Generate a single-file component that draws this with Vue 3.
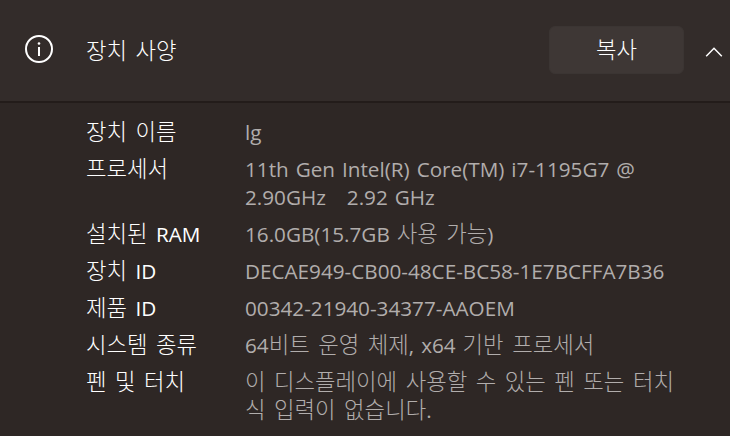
<template>
  <div class="panel">
    <div class="header">
      <svg class="info-icon" width="28" height="28" viewBox="0 0 28 28" fill="none">
        <circle cx="14" cy="14" r="13" stroke="#fff" stroke-width="2" />
        <rect x="13" y="12" width="2" height="9" fill="#fff" />
        <circle cx="14" cy="8.5" r="1.3" fill="#fff" />
      </svg>
      <div class="title">
        <span v-for="(r, i) in runs('장치 사양')" :key="i" :class="r.cls">{{ r.text }}</span>
      </div>
      <button class="copy-btn">
        <span v-for="(r, i) in runs('복사')" :key="i" :class="r.cls">{{ r.text }}</span>
      </button>
      <svg class="chevron" width="18" height="12" viewBox="0 0 18 12" fill="none">
        <path d="M1.2 10.2 L9 2.2 L16.8 10.2" stroke="#fff" stroke-width="1.5" />
      </svg>
    </div>
    <div class="specs">
      <div v-for="row in rows" :key="row.label" class="row">
        <div class="label">
          <span v-for="(r, i) in runs(row.label)" :key="i" :class="r.cls">{{ r.text }}</span>
        </div>
        <div class="value">
          <div v-for="line in row.lines" :key="line" class="line">
            <span v-for="(r, i) in runs(line)" :key="i" :class="r.cls">{{ r.text }}</span>
          </div>
        </div>
      </div>
    </div>
  </div>
</template>

<script setup>
const rows = [
  { label: '장치 이름', lines: ['lg'] },
  { label: '프로세서', lines: ['11th Gen Intel(R) Core(TM) i7-1195G7 @', '2.90GHz   2.92 GHz'] },
  { label: '설치된 RAM', lines: ['16.0GB(15.7GB 사용 가능)'] },
  { label: '장치 ID', lines: ['DECAE949-CB00-48CE-BC58-1E7BCFFA7B36'] },
  { label: '제품 ID', lines: ['00342-21940-34377-AAOEM'] },
  { label: '시스템 종류', lines: ['64비트 운영 체제, x64 기반 프로세서'] },
  { label: '펜 및 터치', lines: ['이 디스플레이에 사용할 수 있는 펜 또는 터치', '식 입력이 없습니다.'] },
]

// hangul runs get a larger size, latin text stays at the base size
const runs = (s) =>
  s.split(/([가-힣]+(?: [가-힣]+)*)/)
    .filter(Boolean)
    .map((text) => ({ text, cls: /[가-힣]/.test(text) ? 'ko' : 'en' }))
</script>

<style>
html, body {
  margin: 0;
  background: #2e2725;
}
</style>

<style scoped>
.panel {
  width: 730px;
  height: 436px;
  overflow: hidden;
  background: #2e2725;
  font-family: "Open Sans", "Noto Sans CJK KR", sans-serif;
  font-size: 20.7px;
  color: #fff;
}

.ko {
  font-family: "Noto Sans CJK KR", sans-serif;
  font-size: 22.3px;
  font-weight: 300;
  word-spacing: 3.6px;
  line-height: 1;
}

.en {
  word-spacing: 1.6px;
}

.header {
  display: flex;
  align-items: center;
  height: 103px;
  padding-left: 25px;
  padding-right: 7px;
  box-sizing: border-box;
  background: #332c2a;
  border-bottom: 2px solid #231c1a;
}

.info-icon {
  flex: none;
  margin-bottom: 3px;
}

.title {
  margin-left: 33px;
  flex: 1;
  line-height: 28px;
}

.copy-btn {
  width: 135px;
  height: 48px;
  margin-bottom: 1px;
  border: 1px solid #3b3533;
  border-radius: 6px;
  background: #3e3735;
  color: #fff;
  font: inherit;
  line-height: 28px;
}

.chevron {
  margin-left: 21px;
  margin-top: 3px;
}

.specs {
  padding: 15px 0 0 86px;
  display: flex;
  flex-direction: column;
  gap: 9px;
}

.row {
  display: flex;
  line-height: 28px;
}

.label {
  width: 159px;
  flex: none;
  white-space: pre;
}

.label .en {
  word-spacing: 3px;
}

.value {
  color: #b1adac;
}

.line {
  white-space: pre;
  height: 28px;
}
</style>
